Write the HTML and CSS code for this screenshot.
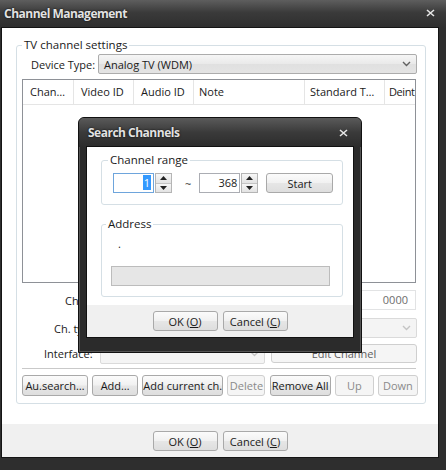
FILE: index.html
```html
<!DOCTYPE html>
<html>
<head>
<meta charset="utf-8">
<link rel="stylesheet" href="styles.css">
</head>
<body>
<div class="window">
  <div class="titlebar">
    <span class="title">Channel Management</span>
    <svg class="close" width="9" height="8" viewBox="0 0 9 8"><path d="M1 1 L8 7 M8 1 L1 7" stroke="#e6e6e6" stroke-width="1.6" fill="none"/></svg>
  </div>
  <div class="client">
    <fieldset class="group tv">
      <legend>TV channel settings</legend>
      <div class="device-row">
        <span class="device-lbl">Device Type:</span>
        <div class="combo">
          <span>Analog TV (WDM)</span>
          <svg class="chev" width="9" height="6" viewBox="0 0 9 6"><path d="M1 1 L4.5 4.5 L8 1" stroke="#606060" stroke-width="1.4" fill="none"/></svg>
        </div>
      </div>
      <div class="list">
        <div class="list-head">
          <div class="col w1">Chan…</div>
          <div class="col w2">Video ID</div>
          <div class="col w3">Audio ID</div>
          <div class="col w4">Note</div>
          <div class="col w5">Standard T…</div>
          <div class="col w6">Deint</div>
        </div>
      </div>
      <div class="form-row r1">
        <span class="lbl p1">Channel:</span>
        <div class="textbox">0000</div>
      </div>
      <div class="form-row r2">
        <span class="lbl p2">Ch. type:</span>
        <div class="combo disabled">
          <span></span>
          <svg class="chev" width="9" height="6" viewBox="0 0 9 6"><path d="M1 1 L4.5 4.5 L8 1" stroke="#c4c4c4" stroke-width="1.4" fill="none"/></svg>
        </div>
      </div>
      <div class="form-row r3">
        <span class="lbl p3">Interface:</span>
        <div class="combo disabled short">
          <span></span>
          <svg class="chev" width="9" height="6" viewBox="0 0 9 6"><path d="M1 1 L4.5 4.5 L8 1" stroke="#c4c4c4" stroke-width="1.4" fill="none"/></svg>
        </div>
        <button class="btn edit">Edit Channel</button>
      </div>
      <div class="sep"></div>
      <div class="btn-row">
        <button class="btn b-au">Au.search…</button>
        <button class="btn b-add">Add…</button>
        <button class="btn b-cur">Add current ch.</button>
        <button class="btn b-del off">Delete</button>
        <button class="btn b-rem">Remove All</button>
        <button class="btn b-up off">Up</button>
        <button class="btn b-down off">Down</button>
      </div>
    </fieldset>
    <div class="footer">
      <button class="btn dlg">OK (<u>O</u>)</button>
      <button class="btn dlg">Cancel (<u>C</u>)</button>
    </div>
  </div>

  <div class="dialog">
    <div class="titlebar small">
      <span class="title">Search Channels</span>
      <svg class="close" width="9" height="8" viewBox="0 0 9 8"><path d="M1 1 L8 7 M8 1 L1 7" stroke="#e6e6e6" stroke-width="1.6" fill="none"/></svg>
    </div>
    <div class="dclient">
      <fieldset class="group range">
        <legend>Channel range</legend>
        <div class="range-row">
          <div class="spin">
            <div class="spin-box focus"><span class="sel">1</span></div>
            <div class="spin-btns">
              <div class="sb"><svg width="7" height="4" viewBox="0 0 7 4"><path d="M0 4 L3.5 0 L7 4 Z" fill="#222"/></svg></div>
              <div class="sb"><svg width="7" height="4" viewBox="0 0 7 4"><path d="M0 0 L3.5 4 L7 0 Z" fill="#222"/></svg></div>
            </div>
          </div>
          <span class="tilde">~</span>
          <div class="spin">
            <div class="spin-box"><span>368</span></div>
            <div class="spin-btns">
              <div class="sb"><svg width="7" height="4" viewBox="0 0 7 4"><path d="M0 4 L3.5 0 L7 4 Z" fill="#222"/></svg></div>
              <div class="sb"><svg width="7" height="4" viewBox="0 0 7 4"><path d="M0 0 L3.5 4 L7 0 Z" fill="#222"/></svg></div>
            </div>
          </div>
          <button class="btn start">Start</button>
        </div>
      </fieldset>
      <fieldset class="group addr">
        <legend>Address</legend>
        <div class="dot">.</div>
        <div class="progress"></div>
      </fieldset>
      <div class="footer dfooter">
        <button class="btn dlg">OK (<u>O</u>)</button>
        <button class="btn dlg">Cancel (<u>C</u>)</button>
      </div>
    </div>
  </div>
</div>
</body>
</html>
```

FILE: styles.css
```css
* { box-sizing: border-box; }
html, body { margin: 0; padding: 0; }
body {
  width: 446px; height: 470px; overflow: hidden;
  background: #2d2d2d;
  font-family: "Open Sans", "Noto Sans", sans-serif;
  font-size: 11px;
  color: #1a1a1a;
}
.window {
  position: relative;
  width: 446px; height: 470px;
  background: #2e2e2e;
}
.titlebar {
  height: 28px;
  display: flex; align-items: center; justify-content: space-between;
  padding: 0 11px 2px 4px;
  background: linear-gradient(#5e5e5e, #3a3a3a 45%, #2e2e2e);
}
.title {
  font-weight: bold; font-size: 12px; color: #e2e2e2;
  letter-spacing: -0.5px;
  text-shadow: 0 0 2px #000;
}
.client {
  width: 436px; height: 429px;
  margin-left: 2px;
  background: #fff;
  outline: 1px solid #141414;
  display: flex; flex-direction: column;
  padding-top: 10px;
}
.group {
  margin: 0; padding: 0;
  border: 1px solid #d5dfe5;
  border-radius: 3px;
  min-width: 0;
}
.group legend {
  line-height: 14px; height: 14px;
  padding: 0 2px;
  font-size: 11.5px;
}
.tv {
  margin: 0 12px 0 14px;
  height: 366px;
  padding: 2px 8px 0 5px;
}
.tv legend { margin-left: 0; }
.device-row { display: flex; align-items: center; height: 20px; }
.device-lbl { width: 76px; padding-left: 9px; white-space: nowrap; }
.combo {
  flex: 1;
  height: 20px;
  border: 1px solid #acacac;
  border-radius: 2px;
  background: linear-gradient(#f6f6f6, #e9e9e9 50%, #e0e0e0 51%, #e4e4e4);
  display: flex; align-items: center; justify-content: space-between;
  padding: 0 5px 0 5px;
}
.combo.disabled {
  background: #f4f4f4; border-color: #dadada;
}
.combo.short { flex: 0 0 165px; }
.list {
  margin-top: 5px;
  width: 394px; height: 204px;
  border: 1px solid #8e9197;
  overflow: hidden;
}
.list-head {
  display: flex; height: 25px;
  border-bottom: 1px solid #e5e5e5;
  white-space: nowrap;
}
.col {
  flex: none;
  border-right: 1px solid #e5e5e5;
  line-height: 24px;
  padding-left: 7px;
}
.w1 { width: 51px; }
.w2 { width: 60px; }
.w3 { width: 60px; }
.w4 { width: 111px; padding-left: 5px; }
.w5 { width: 80px; padding-left: 5px; }
.w6 { width: 31px; border-right: none; padding-left: 4px; letter-spacing: -0.4px; }
.form-row { display: flex; align-items: center; height: 20px; }
.r1 { margin-top: 7px; }
.r2 { margin-top: 8px; }
.r3 { margin-top: 6px; height: 19px; }
.lbl { flex: 0 0 78px; white-space: nowrap; }
.p1 { padding-left: 43px; }
.p2 { padding-left: 32px; }
.p3 { padding-left: 22px; }
.textbox {
  flex: 1; margin-right: 1px;
  height: 20px;
  border: 1px solid #e2e3e4;
  text-align: right; line-height: 18px;
  padding-right: 7px;
  color: #6d6d6d;
}
.btn {
  font-family: inherit; font-size: 11px; color: #1a1a1a;
  height: 21px; padding: 0;
  border: 1px solid #a9a9a9;
  border-radius: 3px;
  background: linear-gradient(#fbfbfb, #f1f1f1 48%, #e6e6e6 52%, #dedede);
  white-space: nowrap;
}
.btn.off {
  color: #8a8a8a; border-color: #cfcfcf;
  background: #f5f5f5;
}
.edit {
  margin-left: 6px; flex: 1; height: 19px;
  border-color: #cfcfcf; color: #5e5e5e;
  background: #f5f5f5;
}
.sep {
  margin-top: 5px;
  height: 2px;
  border-top: 1px solid #c9c9c9;
  border-bottom: 1px solid #fff;
  width: 394px;
}
.btn-row {
  margin-top: 5px;
  display: flex; justify-content: space-between;
  width: 396px;
}
.b-au { width: 66px; }
.b-add { width: 46px; }
.b-cur { width: 81px; }
.b-del { width: 38px; }
.b-rem { width: 61px; }
.b-up { width: 39px; }
.b-down { width: 40px; }
.footer {
  margin-top: auto;
  height: 33px;
  background: #f0f0f0;
  display: flex; justify-content: center; gap: 5px;
  padding-top: 7px;
}
.btn.dlg { width: 65px; height: 20px; }
u { text-decoration: underline; }

/* Search dialog, floating over the main window */
.dialog {
  position: absolute; left: 78px; top: 117px;
  width: 284px; height: 236px;
  background: #2b2b2b;
  border: 1px solid #111;
  border-radius: 6px 6px 0 0;
  box-shadow: inset 0 0 0 1px #555;
}
.titlebar.small {
  height: 29px;
  border-radius: 5px 5px 0 0;
  padding: 0 13px 0 9px;
  background: linear-gradient(#5a5a5a, #3a3a3a 50%, #2c2c2c);
}
.dclient {
  width: 266px; height: 190px;
  margin-left: 8px;
  background: #fff;
  outline: 1px solid #111;
  display: flex; flex-direction: column;
  padding-top: 6px;
}
.range {
  margin: 0 10px 0 14px;
  height: 52px;
  padding: 6px 0 0 11px;
}
.range legend { margin-left: -5px; }
.range-row { display: flex; align-items: center; height: 20px; }
.spin { display: flex; height: 20px; width: 59px; }
.spin-box {
  flex: 1; border: 1px solid #abadb3;
  text-align: right; padding-right: 2px;
  line-height: 18px;
}
.spin-box.focus { border-color: #6ea5dc; }
.sel { background: #3399ff; color: #fff; padding: 0 1px; }
.spin-btns {
  width: 17px; margin-left: 1px;
  display: flex; flex-direction: column;
  border: 1px solid #b5b5b5;
}
.sb {
  flex: 1; display: flex; align-items: center; justify-content: center;
  background: linear-gradient(#f7f7f7, #e3e3e3);
}
.sb + .sb { border-top: 1px solid #c4c4c4; }
.tilde { margin: 0 8px 0 13px; color: #333; }
.start { width: 67px; height: 20px; margin-left: 8px; }
.addr {
  margin: 12px 10px 0 14px;
  height: 80px;
  padding: 6px 0 0 9px;
}
.addr legend { margin-left: -5px; }
.dot { line-height: 14px; padding-left: 7px; }
.progress {
  margin-top: 15px;
  width: 219px; height: 20px;
  border: 1px solid #bcbcbc;
  background: #e6e6e6;
}
.dfooter { height: 32px; padding-top: 6px; }
```
